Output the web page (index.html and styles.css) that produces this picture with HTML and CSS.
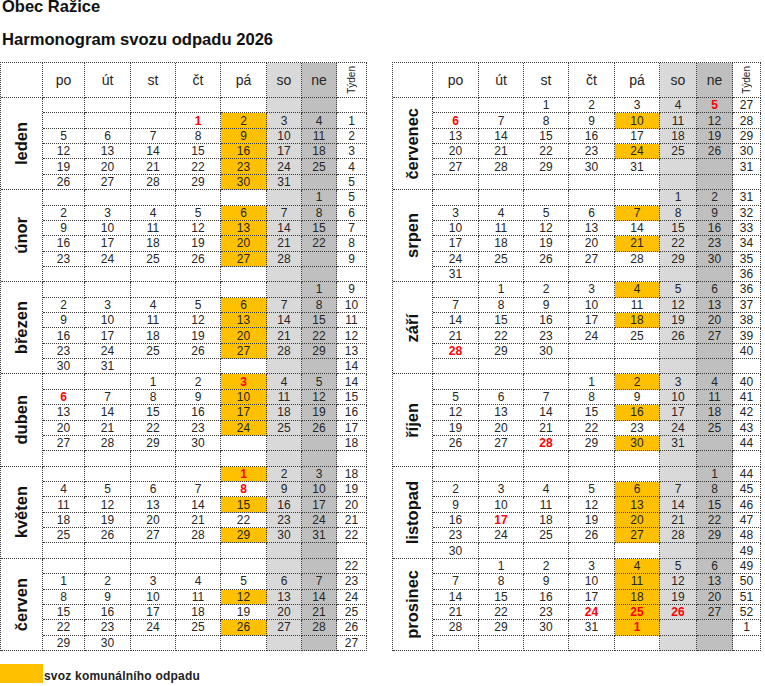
FILE: index.html
```html
<!DOCTYPE html>
<html lang="cs">
<head>
<meta charset="utf-8">
<title>Harmonogram svozu odpadu 2026</title>
<link rel="stylesheet" href="styles.css">
</head>
<body>
<div class="page">
  <h1 class="t1">Obec Ražice</h1>
  <h2 class="t2">Harmonogram svozu odpadu 2026</h2>
  <div class="tables">
    <div class="cal left">
      <span></span><span class="hd">po</span><span class="hd">út</span><span class="hd">st</span><span class="hd">čt</span><span class="hd">pá</span><span class="hd so">so</span><span class="hd ne">ne</span><span class="hd wkh"><em class="rot">Týden</em></span>

      <span class="m"><em class="rot mn">leden</em></span>
      <span></span><span></span><span></span><span></span><span></span><span class="so"></span><span class="ne"></span><span class="wk"></span>
      <span></span><span></span><span></span><span class="r">1</span><span class="o">2</span><span class="so">3</span><span class="ne">4</span><span class="wk">1</span>
      <span>5</span><span>6</span><span>7</span><span>8</span><span class="o">9</span><span class="so">10</span><span class="ne">11</span><span class="wk">2</span>
      <span>12</span><span>13</span><span>14</span><span>15</span><span class="o">16</span><span class="so">17</span><span class="ne">18</span><span class="wk">3</span>
      <span>19</span><span>20</span><span>21</span><span>22</span><span class="o">23</span><span class="so">24</span><span class="ne">25</span><span class="wk">4</span>
      <span>26</span><span>27</span><span>28</span><span>29</span><span class="o">30</span><span class="so">31</span><span class="ne"></span><span class="wk">5</span>

      <span class="m"><em class="rot mn">únor</em></span>
      <span></span><span></span><span></span><span></span><span></span><span class="so"></span><span class="ne">1</span><span class="wk">5</span>
      <span>2</span><span>3</span><span>4</span><span>5</span><span class="o">6</span><span class="so">7</span><span class="ne">8</span><span class="wk">6</span>
      <span>9</span><span>10</span><span>11</span><span>12</span><span class="o">13</span><span class="so">14</span><span class="ne">15</span><span class="wk">7</span>
      <span>16</span><span>17</span><span>18</span><span>19</span><span class="o">20</span><span class="so">21</span><span class="ne">22</span><span class="wk">8</span>
      <span>23</span><span>24</span><span>25</span><span>26</span><span class="o">27</span><span class="so">28</span><span class="ne"></span><span class="wk">9</span>
      <span></span><span></span><span></span><span></span><span></span><span class="so"></span><span class="ne"></span><span class="wk"></span>

      <span class="m"><em class="rot mn">březen</em></span>
      <span></span><span></span><span></span><span></span><span></span><span class="so"></span><span class="ne">1</span><span class="wk">9</span>
      <span>2</span><span>3</span><span>4</span><span>5</span><span class="o">6</span><span class="so">7</span><span class="ne">8</span><span class="wk">10</span>
      <span>9</span><span>10</span><span>11</span><span>12</span><span class="o">13</span><span class="so">14</span><span class="ne">15</span><span class="wk">11</span>
      <span>16</span><span>17</span><span>18</span><span>19</span><span class="o">20</span><span class="so">21</span><span class="ne">22</span><span class="wk">12</span>
      <span>23</span><span>24</span><span>25</span><span>26</span><span class="o">27</span><span class="so">28</span><span class="ne">29</span><span class="wk">13</span>
      <span>30</span><span>31</span><span></span><span></span><span></span><span class="so"></span><span class="ne"></span><span class="wk">14</span>

      <span class="m"><em class="rot mn">duben</em></span>
      <span></span><span></span><span>1</span><span>2</span><span class="o r">3</span><span class="so">4</span><span class="ne">5</span><span class="wk">14</span>
      <span class="r">6</span><span>7</span><span>8</span><span>9</span><span class="o">10</span><span class="so">11</span><span class="ne">12</span><span class="wk">15</span>
      <span>13</span><span>14</span><span>15</span><span>16</span><span class="o">17</span><span class="so">18</span><span class="ne">19</span><span class="wk">16</span>
      <span>20</span><span>21</span><span>22</span><span>23</span><span class="o">24</span><span class="so">25</span><span class="ne">26</span><span class="wk">17</span>
      <span>27</span><span>28</span><span>29</span><span>30</span><span></span><span class="so"></span><span class="ne"></span><span class="wk">18</span>
      <span></span><span></span><span></span><span></span><span></span><span class="so"></span><span class="ne"></span><span class="wk"></span>

      <span class="m"><em class="rot mn">květen</em></span>
      <span></span><span></span><span></span><span></span><span class="o r">1</span><span class="so">2</span><span class="ne">3</span><span class="wk">18</span>
      <span>4</span><span>5</span><span>6</span><span>7</span><span class="r">8</span><span class="so">9</span><span class="ne">10</span><span class="wk">19</span>
      <span>11</span><span>12</span><span>13</span><span>14</span><span class="o">15</span><span class="so">16</span><span class="ne">17</span><span class="wk">20</span>
      <span>18</span><span>19</span><span>20</span><span>21</span><span>22</span><span class="so">23</span><span class="ne">24</span><span class="wk">21</span>
      <span>25</span><span>26</span><span>27</span><span>28</span><span class="o">29</span><span class="so">30</span><span class="ne">31</span><span class="wk">22</span>
      <span></span><span></span><span></span><span></span><span></span><span class="so"></span><span class="ne"></span><span class="wk"></span>

      <span class="m"><em class="rot mn">červen</em></span>
      <span></span><span></span><span></span><span></span><span></span><span class="so"></span><span class="ne"></span><span class="wk">22</span>
      <span>1</span><span>2</span><span>3</span><span>4</span><span>5</span><span class="so">6</span><span class="ne">7</span><span class="wk">23</span>
      <span>8</span><span>9</span><span>10</span><span>11</span><span class="o">12</span><span class="so">13</span><span class="ne">14</span><span class="wk">24</span>
      <span>15</span><span>16</span><span>17</span><span>18</span><span>19</span><span class="so">20</span><span class="ne">21</span><span class="wk">25</span>
      <span>22</span><span>23</span><span>24</span><span>25</span><span class="o">26</span><span class="so">27</span><span class="ne">28</span><span class="wk">26</span>
      <span>29</span><span>30</span><span></span><span></span><span></span><span class="so"></span><span class="ne"></span><span class="wk">27</span>
    </div>

    <div class="cal right">
      <span></span><span class="hd">po</span><span class="hd">út</span><span class="hd">st</span><span class="hd">čt</span><span class="hd">pá</span><span class="hd so">so</span><span class="hd ne">ne</span><span class="hd wkh"><em class="rot">Týden</em></span>

      <span class="m"><em class="rot mn">červenec</em></span>
      <span></span><span></span><span>1</span><span>2</span><span>3</span><span class="so">4</span><span class="ne r">5</span><span class="wk">27</span>
      <span class="r">6</span><span>7</span><span>8</span><span>9</span><span class="o">10</span><span class="so">11</span><span class="ne">12</span><span class="wk">28</span>
      <span>13</span><span>14</span><span>15</span><span>16</span><span>17</span><span class="so">18</span><span class="ne">19</span><span class="wk">29</span>
      <span>20</span><span>21</span><span>22</span><span>23</span><span class="o">24</span><span class="so">25</span><span class="ne">26</span><span class="wk">30</span>
      <span>27</span><span>28</span><span>29</span><span>30</span><span>31</span><span class="so"></span><span class="ne"></span><span class="wk">31</span>
      <span></span><span></span><span></span><span></span><span></span><span class="so"></span><span class="ne"></span><span class="wk"></span>

      <span class="m"><em class="rot mn">srpen</em></span>
      <span></span><span></span><span></span><span></span><span></span><span class="so">1</span><span class="ne">2</span><span class="wk">31</span>
      <span>3</span><span>4</span><span>5</span><span>6</span><span class="o">7</span><span class="so">8</span><span class="ne">9</span><span class="wk">32</span>
      <span>10</span><span>11</span><span>12</span><span>13</span><span>14</span><span class="so">15</span><span class="ne">16</span><span class="wk">33</span>
      <span>17</span><span>18</span><span>19</span><span>20</span><span class="o">21</span><span class="so">22</span><span class="ne">23</span><span class="wk">34</span>
      <span>24</span><span>25</span><span>26</span><span>27</span><span>28</span><span class="so">29</span><span class="ne">30</span><span class="wk">35</span>
      <span>31</span><span></span><span></span><span></span><span></span><span class="so"></span><span class="ne"></span><span class="wk">36</span>

      <span class="m"><em class="rot mn">září</em></span>
      <span></span><span>1</span><span>2</span><span>3</span><span class="o">4</span><span class="so">5</span><span class="ne">6</span><span class="wk">36</span>
      <span>7</span><span>8</span><span>9</span><span>10</span><span>11</span><span class="so">12</span><span class="ne">13</span><span class="wk">37</span>
      <span>14</span><span>15</span><span>16</span><span>17</span><span class="o">18</span><span class="so">19</span><span class="ne">20</span><span class="wk">38</span>
      <span>21</span><span>22</span><span>23</span><span>24</span><span>25</span><span class="so">26</span><span class="ne">27</span><span class="wk">39</span>
      <span class="r">28</span><span>29</span><span>30</span><span></span><span></span><span class="so"></span><span class="ne"></span><span class="wk">40</span>
      <span></span><span></span><span></span><span></span><span></span><span class="so"></span><span class="ne"></span><span class="wk"></span>

      <span class="m"><em class="rot mn">říjen</em></span>
      <span></span><span></span><span></span><span>1</span><span class="o">2</span><span class="so">3</span><span class="ne">4</span><span class="wk">40</span>
      <span>5</span><span>6</span><span>7</span><span>8</span><span>9</span><span class="so">10</span><span class="ne">11</span><span class="wk">41</span>
      <span>12</span><span>13</span><span>14</span><span>15</span><span class="o">16</span><span class="so">17</span><span class="ne">18</span><span class="wk">42</span>
      <span>19</span><span>20</span><span>21</span><span>22</span><span>23</span><span class="so">24</span><span class="ne">25</span><span class="wk">43</span>
      <span>26</span><span>27</span><span class="r">28</span><span>29</span><span class="o">30</span><span class="so">31</span><span class="ne"></span><span class="wk">44</span>
      <span></span><span></span><span></span><span></span><span></span><span class="so"></span><span class="ne"></span><span class="wk"></span>

      <span class="m"><em class="rot mn">listopad</em></span>
      <span></span><span></span><span></span><span></span><span></span><span class="so"></span><span class="ne">1</span><span class="wk">44</span>
      <span>2</span><span>3</span><span>4</span><span>5</span><span class="o">6</span><span class="so">7</span><span class="ne">8</span><span class="wk">45</span>
      <span>9</span><span>10</span><span>11</span><span>12</span><span class="o">13</span><span class="so">14</span><span class="ne">15</span><span class="wk">46</span>
      <span>16</span><span class="r">17</span><span>18</span><span>19</span><span class="o">20</span><span class="so">21</span><span class="ne">22</span><span class="wk">47</span>
      <span>23</span><span>24</span><span>25</span><span>26</span><span class="o">27</span><span class="so">28</span><span class="ne">29</span><span class="wk">48</span>
      <span>30</span><span></span><span></span><span></span><span></span><span class="so"></span><span class="ne"></span><span class="wk">49</span>

      <span class="m"><em class="rot mn">prosinec</em></span>
      <span></span><span>1</span><span>2</span><span>3</span><span class="o">4</span><span class="so">5</span><span class="ne">6</span><span class="wk">49</span>
      <span>7</span><span>8</span><span>9</span><span>10</span><span class="o">11</span><span class="so">12</span><span class="ne">13</span><span class="wk">50</span>
      <span>14</span><span>15</span><span>16</span><span>17</span><span class="o">18</span><span class="so">19</span><span class="ne">20</span><span class="wk">51</span>
      <span>21</span><span>22</span><span>23</span><span class="r">24</span><span class="o r">25</span><span class="so r">26</span><span class="ne">27</span><span class="wk">52</span>
      <span>28</span><span>29</span><span>30</span><span>31</span><span class="o r">1</span><span class="so"></span><span class="ne"></span><span class="wk">1</span>
      <span></span><span></span><span></span><span></span><span></span><span class="so"></span><span class="ne"></span><span class="wk"></span>
    </div>
  </div>
  <div class="legend">
    <span class="swatch"></span>
    <span class="legend-text">svoz komunálního odpadu</span>
  </div>
</div>
</body>
</html>
```

FILE: styles.css
```css
html, body {
  margin: 0;
  padding: 0;
  background: #ffffff;
}

body {
  font-family: "Liberation Sans", Arial, sans-serif;
  color: #222222;
}

.page {
  width: 765px;
  height: 686px;
  overflow: hidden;
}

.t1 {
  margin: 0;
  padding-left: 2px;
  font-size: 16.5px;
  line-height: 12px;
  font-weight: bold;
  color: #111111;
}

.t2 {
  margin: 18px 0 12px 0;
  padding-left: 2px;
  font-size: 16.6px;
  line-height: 20px;
  font-weight: bold;
  color: #111111;
}

.tables {
  display: flex;
  gap: 25px;
  align-items: flex-start;
}

.cal {
  display: grid;
  grid-template-rows: 35px repeat(36, 15.36px);
  border-top: 1px dotted #3a3a3a;
  border-left: 1px dotted #3a3a3a;
}

.left {
  grid-template-columns: 42px 42px 46px 45px 45px 46px 35px 35px 30px;
}

.right {
  grid-template-columns: 40px 46px 45px 45px 46px 45px 37px 36px 28px;
}

.cal > span {
  box-sizing: border-box;
  border-right: 1px dotted #3a3a3a;
  border-bottom: 1px dotted #3a3a3a;
  display: flex;
  align-items: center;
  justify-content: center;
  font-size: 12px;
  line-height: 1;
  color: #262626;
  overflow: hidden;
}

.cal > .hd {
  font-size: 14px;
  color: #262626;
}

.cal > .so {
  background: #d9d9d9;
}

.cal > .ne {
  background: #bfbfbf;
}

.cal > .o {
  background: #ffc000;
}

.cal > .r {
  color: #ff0000;
  font-weight: bold;
}

.cal > .m {
  grid-row: span 6;
}

.rot {
  font-style: normal;
  writing-mode: vertical-rl;
  transform: rotate(180deg);
  white-space: nowrap;
}

.wkh .rot {
  font-size: 10px;
  line-height: 11px;
}

.mn {
  font-size: 16.5px;
  font-weight: bold;
  line-height: 19px;
  color: #111111;
}

.legend {
  display: flex;
  align-items: flex-end;
  margin-top: 13px;
}

.swatch {
  width: 43px;
  height: 19px;
  background: #ffc000;
}

.legend-text {
  padding-left: 1px;
  padding-bottom: 0;
  font-size: 12px;
  line-height: 14px;
  letter-spacing: 0.2px;
  font-weight: bold;
  color: #222222;
}
```
